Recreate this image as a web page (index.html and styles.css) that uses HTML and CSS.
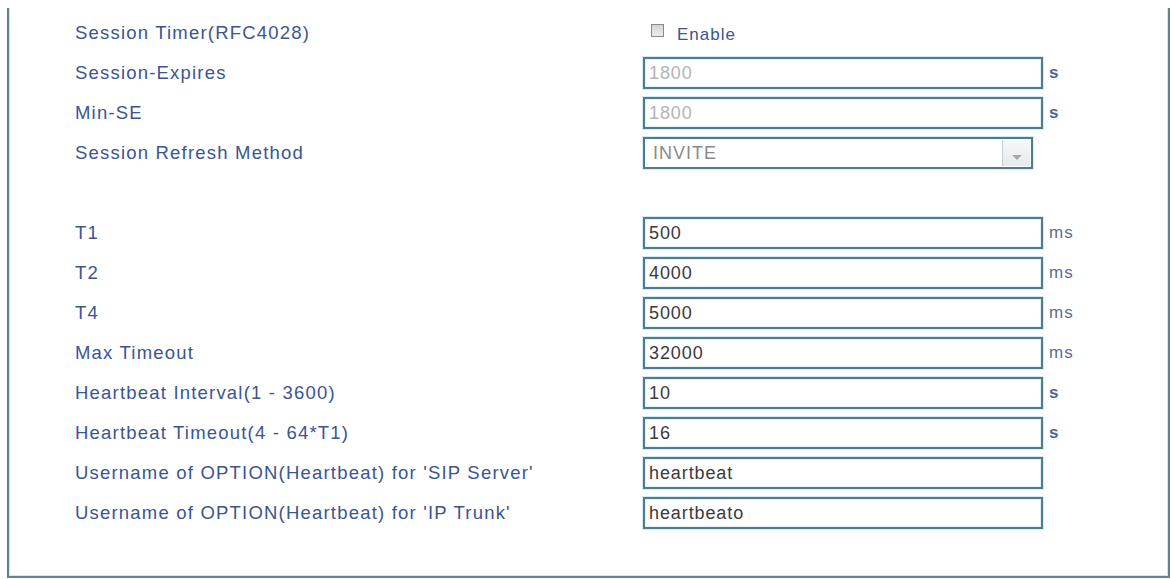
FILE: index.html
```html
<!DOCTYPE html>
<html>
<head>
<meta charset="utf-8">
<link rel="stylesheet" href="styles.css">
</head>
<body>
<div class="panel">
  <div class="form">
    <div class="label">Session Timer(RFC4028)</div>
    <div class="field"><label class="check"><span class="box"></span><span class="check-text">Enable</span></label></div>
    <div class="unit"></div>

    <div class="label">Session-Expires</div>
    <div class="field"><div class="input disabled">1800</div></div>
    <div class="unit sec">s</div>

    <div class="label">Min-SE</div>
    <div class="field"><div class="input disabled">1800</div></div>
    <div class="unit sec">s</div>

    <div class="label">Session Refresh Method</div>
    <div class="field"><div class="select"><span class="select-text">INVITE</span><span class="select-btn"><span class="arrow"></span></span></div></div>
    <div class="unit"></div>

    <div class="spacer"></div>

    <div class="label">T1</div>
    <div class="field"><div class="input">500</div></div>
    <div class="unit">ms</div>

    <div class="label">T2</div>
    <div class="field"><div class="input">4000</div></div>
    <div class="unit">ms</div>

    <div class="label">T4</div>
    <div class="field"><div class="input">5000</div></div>
    <div class="unit">ms</div>

    <div class="label">Max Timeout</div>
    <div class="field"><div class="input">32000</div></div>
    <div class="unit">ms</div>

    <div class="label">Heartbeat Interval(1 - 3600)</div>
    <div class="field"><div class="input">10</div></div>
    <div class="unit sec">s</div>

    <div class="label">Heartbeat Timeout(4 - 64*T1)</div>
    <div class="field"><div class="input">16</div></div>
    <div class="unit sec">s</div>

    <div class="label">Username of OPTION(Heartbeat) for 'SIP Server'</div>
    <div class="field"><div class="input">heartbeat</div></div>
    <div class="unit"></div>

    <div class="label">Username of OPTION(Heartbeat) for 'IP Trunk'</div>
    <div class="field"><div class="input">heartbeato</div></div>
    <div class="unit"></div>
  </div>
</div>
</body>
</html>
```

FILE: styles.css
```css
html, body {
  margin: 0;
  padding: 0;
  background: #ffffff;
}

body {
  font-family: "Liberation Sans", Arial, sans-serif;
}

.panel {
  box-sizing: border-box;
  margin: 8px 0 0 7px;
  width: 1163px;
  height: 570px;
  border: 2px solid #5a8494;
  border-top: none;
  box-shadow: inset 0 -1px 0 #cfe9f1, inset 1px 0 0 #cfe9f1, inset -1px 0 0 #cfe9f1;
  padding: 5px 0 0 66px;
}

.form {
  display: grid;
  grid-template-columns: 568px 400px 60px;
  grid-auto-rows: 40px;
  align-items: center;
}

.spacer {
  grid-column: 1 / -1;
}

.label {
  font-size: 18.5px;
  letter-spacing: 1.2px;
  color: #3a5592;
  white-space: nowrap;
}

.field {
  display: flex;
  align-items: center;
}

.input {
  box-sizing: border-box;
  width: 400px;
  height: 32px;
  border: 2px solid #4f7b8c;
  box-shadow: 0 0 0 1px #d4edf4, inset 0 0 0 1px #e3f3f8;
  padding: 0 4px;
  display: flex;
  align-items: center;
  font-size: 18px;
  letter-spacing: 0.9px;
  color: #3a3a3a;
  background: #ffffff;
}

.input.disabled {
  color: #b4b4b4;
}

.select {
  box-sizing: border-box;
  width: 390px;
  height: 32px;
  border: 2px solid #4f7b8c;
  box-shadow: 0 0 0 1px #d4edf4;
  display: flex;
  align-items: stretch;
  background: #ffffff;
}

.select-text {
  flex: 1;
  display: flex;
  align-items: center;
  padding-left: 8px;
  font-size: 18px;
  letter-spacing: 1px;
  color: #8a8a8a;
}

.select-btn {
  width: 27px;
  margin: 1px;
  border-left: 1px solid #c2ccd4;
  background: linear-gradient(#f6f8fa, #e6eaee);
  display: flex;
  justify-content: center;
  align-items: flex-end;
  padding-bottom: 6px;
}

.arrow {
  width: 0;
  height: 0;
  border-left: 5px solid transparent;
  border-right: 5px solid transparent;
  border-top: 5px solid #a4a9ae;
}

.unit {
  padding-left: 6px;
  font-size: 17px;
  letter-spacing: 1px;
  color: #5a6c94;
}

.unit.sec {
  font-weight: bold;
  color: #4a64a0;
}

.check {
  display: flex;
  align-items: center;
  margin-left: 8px;
}

.box {
  box-sizing: border-box;
  width: 13px;
  height: 13px;
  border: 1px solid #8a8a8a;
  background: linear-gradient(#d4d4d4, #ededed);
  margin-top: -5px;
}

.check-text {
  margin-left: 13px;
  font-size: 17px;
  letter-spacing: 1px;
  color: #3a5592;
  margin-top: 3px;
}
```
